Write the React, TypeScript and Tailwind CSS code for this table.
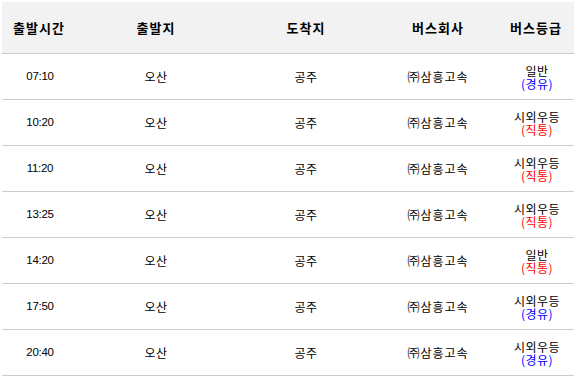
const rows = [
  { time: "07:10", grade: "일반", via: "경유" },
  { time: "10:20", grade: "시외우등", via: "직통" },
  { time: "11:20", grade: "시외우등", via: "직통" },
  { time: "13:25", grade: "시외우등", via: "직통" },
  { time: "14:20", grade: "일반", via: "직통" },
  { time: "17:50", grade: "시외우등", via: "경유" },
  { time: "20:40", grade: "시외우등", via: "경유" },
];

const cols = "grid grid-cols-[74px_160px_140px_124px_1fr]";

export default function App() {
  return (
    <div className="h-[376px] w-[574px] overflow-hidden bg-white pl-[2px] pt-[2px] font-['Noto_Sans_CJK_KR',sans-serif] text-black">
      <div
        className={`${cols} h-[52px] items-center border-b border-[#cccccc] bg-[#f2f2f2] text-center text-[13px] font-bold tracking-[1px]`}
      >
        <div>출발시간</div>
        <div>출발지</div>
        <div>도착지</div>
        <div>버스회사</div>
        <div className="pr-[2px]">버스등급</div>
      </div>
      {rows.map((r) => (
        <div
          key={r.time}
          className={`${cols} h-[46px] items-center border-b border-[#cccccc] text-center text-[12px] tracking-[0.5px]`}
        >
          <div className="pl-[2px] font-['Liberation_Sans',sans-serif] text-[11.5px] tracking-[-0.3px]">
            {r.time}
          </div>
          <div>오산</div>
          <div>공주</div>
          <div className="tracking-[1px]">㈜삼흥고속</div>
          <div className="flex flex-col items-center">
            <span className="block leading-[13px]">{r.grade}</span>
            <span
              className={`block leading-[13px] ${
                r.via === "경유" ? "text-[#0000ff]" : "text-[#ff0000]"
              }`}
            >
              ({r.via})
            </span>
          </div>
        </div>
      ))}
    </div>
  );
}
